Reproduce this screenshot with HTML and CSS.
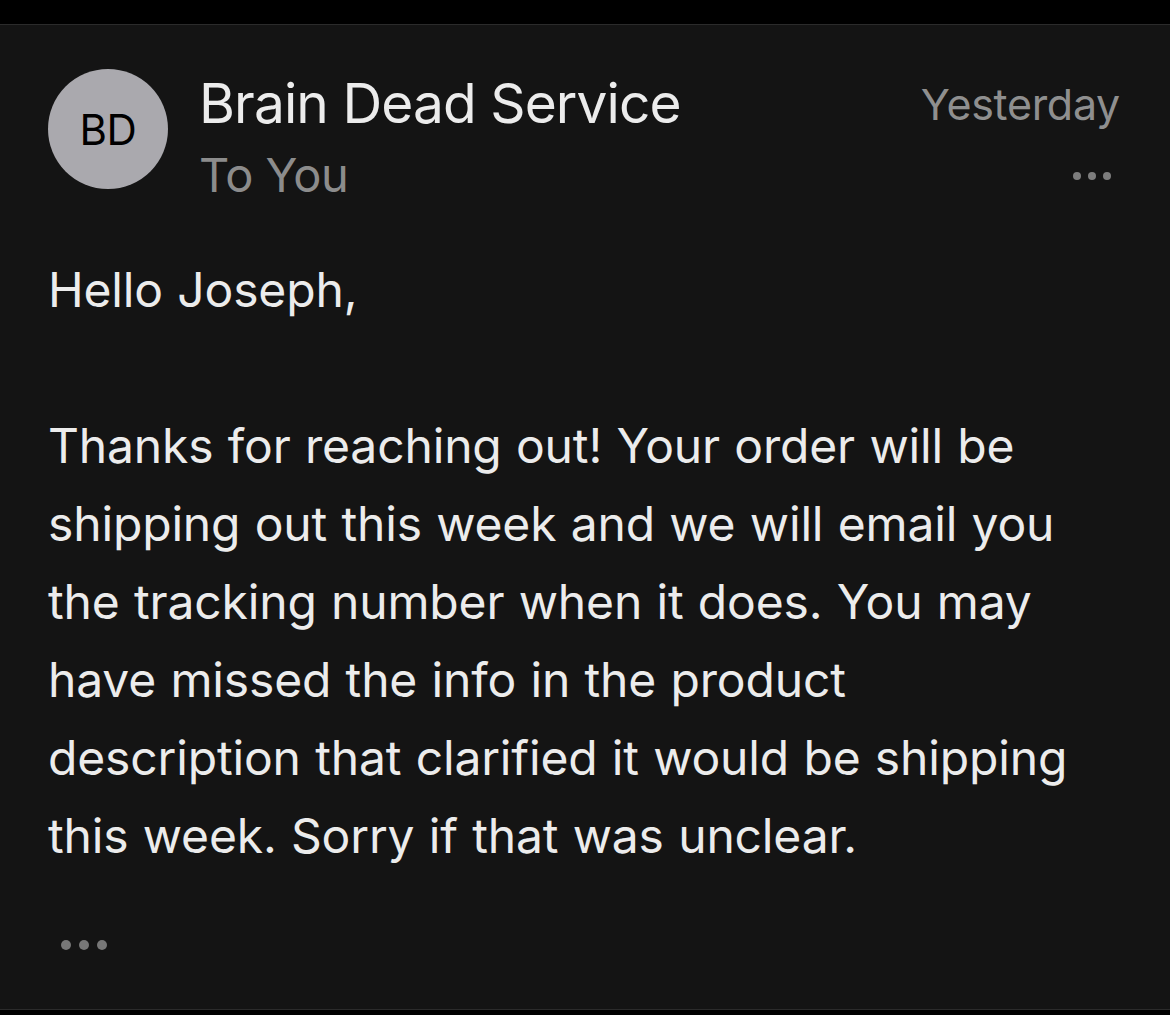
FILE: index.html
```html
<!DOCTYPE html>
<html>
<head>
<meta charset="utf-8">
<link rel="stylesheet" href="styles.css">
</head>
<body>
<div class="topbar"></div>
<main class="mail">
  <header class="head">
    <div class="avatar">BD</div>
    <div class="who">
      <div class="sender">Brain Dead Service</div>
      <div class="to">To You</div>
    </div>
    <div class="meta">
      <div class="date">Yesterday</div>
      <div class="more"><span></span><span></span><span></span></div>
    </div>
  </header>
  <section class="body">
    <p>Hello Joseph,</p>
    <p>Thanks for reaching out! Your order will be shipping out this week and we will email you the tracking number when it does. You may have missed the info in the product description that clarified it would be shipping this week. Sorry if that was unclear.</p>
  </section>
  <div class="expand"><span></span><span></span><span></span></div>
</main>
</body>
</html>
```
FILE: styles.css
```css
html, body {
  margin: 0;
  padding: 0;
  background: #000;
  height: 100%;
}
body {
  font-family: Inter, "Noto Sans", sans-serif;
  overflow: hidden;
}
.topbar {
  height: 24px;
  background: #000;
  border-bottom: 1px solid #2b2b2b;
}
.mail {
  background: #141414;
  height: 985px;
  box-sizing: border-box;
  padding: 44px 50px 0 48px;
  border-bottom: 1px solid #2b2b2b;
}
.head {
  display: flex;
  align-items: flex-start;
}
.avatar {
  width: 120px;
  height: 120px;
  border-radius: 50%;
  background: #aaa9ae;
  color: #000;
  display: flex;
  align-items: center;
  justify-content: center;
  font-size: 42px;
  letter-spacing: -0.5px;
  flex: none;
}
.who {
  margin-left: 31px;
  flex: 1;
}
.sender {
  color: #ececec;
  font-size: 55px;
  line-height: 64px;
  margin-top: 2px;
  letter-spacing: -0.9px;
}
.to {
  color: #8c8c8c;
  font-size: 47px;
  line-height: 60px;
  margin-top: 10px;
  letter-spacing: -0.5px;
}
.meta {
  display: flex;
  flex-direction: column;
  align-items: flex-end;
}
.date {
  color: #8f8f8f;
  font-size: 43px;
  line-height: 56px;
  margin-top: 7px;
  letter-spacing: -0.3px;
}
.more {
  display: flex;
  gap: 7px;
  margin-top: 40px;
  margin-right: 9px;
}
.more span {
  width: 8px;
  height: 8px;
  border-radius: 50%;
  background: #7d7d7d;
}
.body {
  color: #ececec;
  font-size: 48px;
  line-height: 78px;
  letter-spacing: -0.15px;
  word-spacing: 1px;
  margin-top: 46px;
  margin-right: 25px;
}
.body p {
  margin: 0 0 78px;
}
.body p:last-child {
  margin-bottom: 0;
}
.expand {
  display: flex;
  gap: 8px;
  margin-top: 65px;
  margin-left: 13px;
}
.expand span {
  width: 10px;
  height: 10px;
  border-radius: 50%;
  background: #777;
}
```
